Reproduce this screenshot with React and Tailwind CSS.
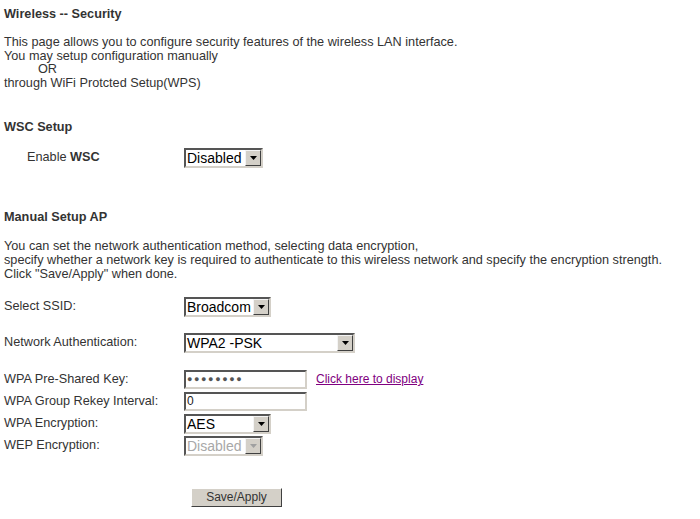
import React from 'react'

function Select({ value, width, disabled }) {
  return (
    <div
      className={`flex h-[20px] items-center border-2 border-t-[#555] border-l-[#555] border-b-[#d4d0c8] border-r-[#d4d0c8] bg-white ${width}`}
    >
      <span
        className={`flex-1 pl-[1px] text-[14px] leading-[16px] font-['Liberation_Sans',Arial,sans-serif] ${disabled ? 'text-[#a8a8a8]' : 'text-black'}`}
      >
        {value}
      </span>
      <span className="flex h-[16px] w-[16px] items-center justify-center border border-t-[#f4f4f4] border-l-[#f4f4f4] border-b-[#404040] border-r-[#404040] bg-[#d4d0c8]">
        <svg width="7" height="4" viewBox="0 0 7 4">
          <path d="M0 0h7L3.5 4z" fill={disabled ? '#a0a0a0' : '#000'} />
        </svg>
      </span>
    </div>
  )
}

function TextBox({ children }) {
  return (
    <div className="flex h-[19px] w-[123px] items-center border-2 border-t-[#555] border-l-[#555] border-b-[#d4d0c8] border-r-[#d4d0c8] bg-white pl-[1px] text-[12px] text-[#222]">
      {children}
    </div>
  )
}

function Row({ label, children, className = '' }) {
  return (
    <div className={`flex items-center ${className}`}>
      <div className="w-[180px]">{label}</div>
      {children}
    </div>
  )
}

export default function App() {
  return (
    <div className="h-[519px] w-[700px] bg-white px-[4px] pt-[7px] text-[12.7px] text-[#333] font-['Liberation_Sans',Arial,sans-serif]">
      <div className="font-bold leading-[14px]">Wireless -- Security</div>

      <div className="mt-[15px] leading-[13.7px]">
        <div>This page allows you to configure security features of the wireless LAN interface.</div>
        <div>You may setup configuration manually</div>
        <div className="pl-[34px]">OR</div>
        <div>through WiFi Protcted Setup(WPS)</div>
      </div>

      <div className="mt-[29px] font-bold leading-[14px]">WSC Setup</div>

      <Row className="mt-[14px]" label={<span className="pl-[23px]">Enable <b>WSC</b></span>}>
        <Select value="Disabled" width="w-[79px]" />
      </Row>

      <div className="mt-[42px] font-bold leading-[14px]">Manual Setup AP</div>

      <div className="mt-[15px] leading-[14px]">
        <div>You can set the network authentication method, selecting data encryption,</div>
        <div>specify whether a network key is required to authenticate to this wireless network and specify the encryption strength.</div>
        <div>Click "Save/Apply" when done.</div>
      </div>

      <Row className="mt-[16px]" label="Select SSID:">
        <Select value="Broadcom" width="w-[87px]" />
      </Row>

      <Row className="mt-[16px]" label="Network Authentication:">
        <Select value="WPA2 -PSK" width="w-[171px]" />
      </Row>

      <div className="mt-[17px] flex flex-col gap-[3px]">
        <Row label="WPA Pre-Shared Key:">
          <TextBox>
            <span className="text-[9px] tracking-[1.6px] text-[#555]">●●●●●●●●</span>
          </TextBox>
          <a href="#" className="ml-[9px] text-[12px] text-[#800080] underline">Click here to display</a>
        </Row>
        <Row label="WPA Group Rekey Interval:">
          <TextBox>0</TextBox>
        </Row>
        <Row label="WPA Encryption:">
          <Select value="AES" width="w-[87px]" />
        </Row>
        <Row className="-mt-[1px]" label="WEP Encryption:">
          <Select value="Disabled" width="w-[79px]" disabled />
        </Row>
      </div>

      <div className="mt-[32px] pl-[187px]">
        <button className="h-[19px] w-[91px] border border-t-white border-l-white border-b-[#404040] border-r-[#404040] bg-[#d4d0c8] text-[12px] leading-[15px] text-[#333] font-['Liberation_Sans',Arial,sans-serif]">
          Save/Apply
        </button>
      </div>
    </div>
  )
}
